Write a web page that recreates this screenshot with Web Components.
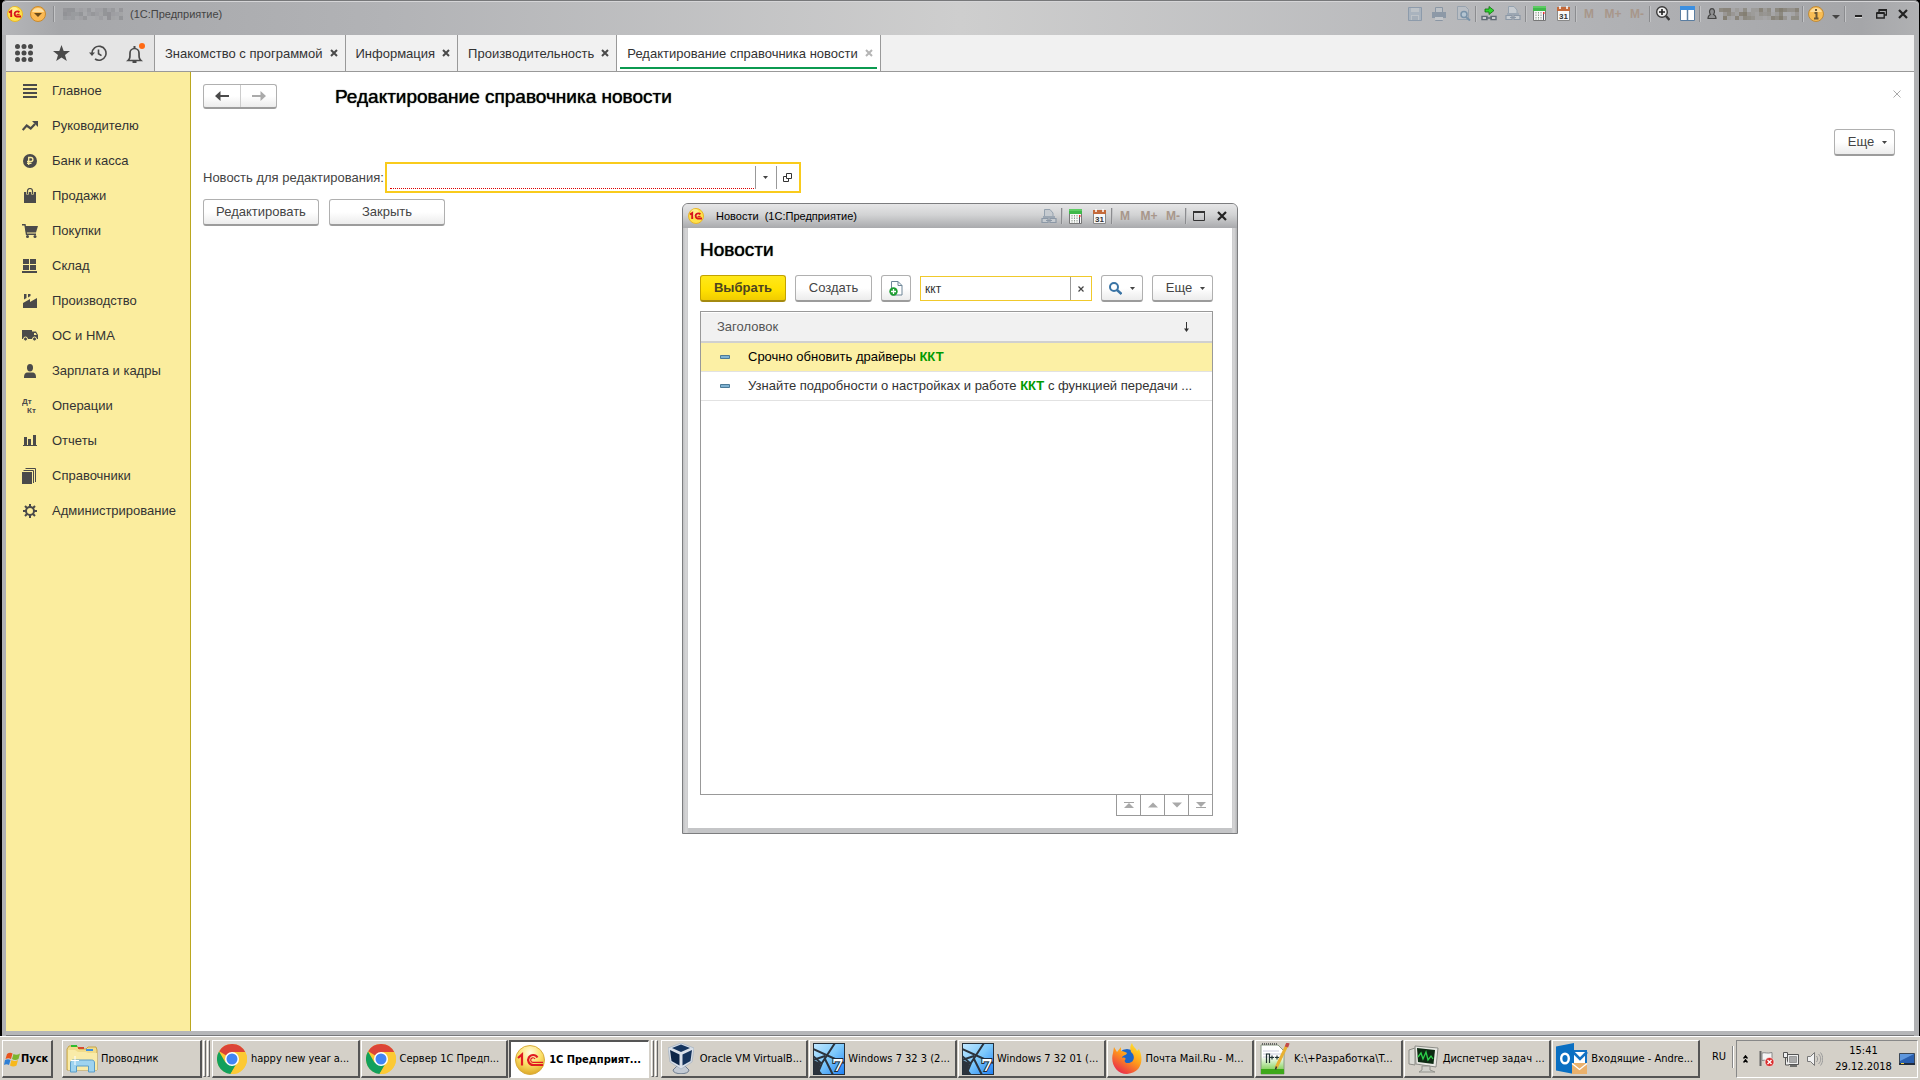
<!DOCTYPE html>
<html lang="ru">
<head>
<meta charset="utf-8">
<title>1С:Предприятие</title>
<style>
  html, body { margin: 0; height: 100%; }
  body { font: 13px/18px "Liberation Sans", Arial, sans-serif; color: #333; background: #000; overflow: hidden; }
</style>
</head>
<body>
<desktop-screen></desktop-screen>

<script>
const logo1c = `<circle cx="8" cy="8" r="7.5" fill="#ffe14a" stroke="#e8b52a"/><circle cx="7" cy="5" r="4" fill="#fff6a8" opacity=".7"/>
  <path d="M2 6.5 4.2 5v6M12.3 6.4a2.6 2.6 0 1 0-2.6 4.1H14" fill="none" stroke="#d8141c" stroke-width="1.9"/><path d="M9.6 8.4h3" stroke="#d8141c" stroke-width="1"/>`;
const chrome = `<circle cx="15" cy="15" r="15" fill="#fcc934"/><path d="M15 15 2.2 7.2A15 15 0 0 1 28.2 8H15z" fill="#dc4437"/><path d="M2 7.5A15 15 0 0 0 13.500 30L20 18.500 15 15 8.500 18.500z" fill="#12a05c"/><path d="M15 8h13.200A15 15 0 0 1 13.500 30L21 18.500z" fill="#fcc934"/><circle cx="15" cy="15" r="7" fill="#fff"/><circle cx="15" cy="15" r="5.500" fill="#4285f4"/>`;
const win7 = `<defs><linearGradient id="s" x1="0" y1="0" x2="1" y2="1"><stop offset="0" stop-color="#c4e9ff"/><stop offset=".5" stop-color="#7cc8fb"/><stop offset="1" stop-color="#1a7cf4"/></linearGradient></defs>
  <rect width="32" height="32" rx="1" fill="url(#s)"/><path d="M0 19 10 32H0z" fill="#2c333c"/><path d="M22 0 9 20 4 32H0V17l12-4M0 6l31 14M12 16l8 16M9 21 0 13" fill="none" stroke="#2c333c" stroke-width="2"/><path d="M0 17l8 3-4 12H0z" fill="#2c333c"/><rect x=".5" y=".5" width="31" height="31" fill="none" stroke="#26303a"/>
  <text x="19" y="28" font-family="DejaVu Serif" font-weight="bold" font-size="17" fill="#fff" stroke="#1d2b3c" stroke-width="2" paint-order="stroke">7</text>`;
/* name: [width, height, drawing]; the drawing's units are pixels */
const ICONS = {
  logo: [16, 16, logo1c],
  menuball: [16, 16, `<circle cx="8" cy="8" r="7.500" fill="#fbb953" stroke="#c98a2d"/><path d="M2 6a6.500 6.500 0 0 1 12 0" fill="#ffdf9e"/><path d="M4 7h8l-4 4z" fill="#6b4b1a"/>`],
  grid: [18, 18, [2.5, 9, 15.5].map(y => [2.5, 9, 15.5].map(x => `<circle cx="${x}" cy="${y}" r="2.500" fill="#4a4a4a"/>`).join('')).join('')],
  star: [17, 16, `<path d="M8.500 0l2.200 5.900 6.300.2-5 3.900 1.800 6-5.300-3.500L3.200 16 5 10 0 6.100l6.300-.2z" fill="#4a4a4a"/>`],
  history: [18, 17, `<path d="M3 9.500V8.300A7 7 0 1 1 6 14" fill="none" stroke="#4a4a4a" stroke-width="1.600"/><path d="M0 7.500h6L3 11z" fill="#4a4a4a"/><path d="M9.500 4.500v4.200l3 2" fill="none" stroke="#4a4a4a" stroke-width="1.600"/>`],
  bell: [20, 21, `<path d="M3 17.500c2-2 2-3 2-7.500a4.500 4.500 0 0 1 9 0c0 4.500 0 5.500 2 7.500z" fill="none" stroke="#4a4a4a" stroke-width="1.700"/><path d="M8.500 3h2v3h-2zM7.500 18h4v2h-4z" fill="#4a4a4a"/><circle cx="17" cy="3" r="3" fill="#ff6a13"/>`],
  x: [8, 8, `<path d="M1 1l6 6M7 1 1 7" stroke="currentColor" stroke-width="2"/>`],
  xthin: [8, 8, `<path d="M.5.5l7 7M7.500.5l-7 7" stroke="currentColor"/>`],
  xclear: [6, 6, `<path d="M.5.5l5 5M5.500.5l-5 5" stroke="currentColor" stroke-width="1.200"/>`],
  xbig: [10, 10, `<path d="M1 1l8 8M9 1 1 9" stroke="#222" stroke-width="2.200"/>`],
  lines: [14, 14, `<path d="M0 1h14M0 5h14M0 9h14M0 13h14" stroke="#4a4a4a" stroke-width="2"/>`],
  trend: [16, 10, `<path d="M.7 9l4-4.500 4 3L13 3" fill="none" stroke="#4a4a4a" stroke-width="2.200"/><path d="M10 0h6v6z" fill="#4a4a4a"/>`],
  ruble: [14, 14, `<circle cx="7" cy="7" r="7" fill="#4a4a4a"/><path d="M5.700 11V3.500h2.200a2 2 0 0 1 0 4H4M4 9.300h4.500" fill="none" stroke="#fbed9e" stroke-width="1.300"/>`],
  bag: [12, 15, `<path d="M0 4h12v11H0z" fill="#4a4a4a"/><path d="M3.500 6.500V3a2.500 2.500 0 0 1 5 0v3.500" fill="none" stroke="#fbed9e" stroke-width="2.600"/><path d="M3.500 6V3a2.500 2.500 0 0 1 5 0v3" fill="none" stroke="#4a4a4a" stroke-width="1.200"/>`],
  cart: [16, 14, `<path d="M0 .7h3l1.500 9.600H14" fill="none" stroke="#4a4a4a" stroke-width="1.400"/><path d="M3 2h13l-2 6.500H4z" fill="#4a4a4a"/><circle cx="5.500" cy="12.500" r="1.500" fill="#4a4a4a"/><circle cx="13" cy="12.500" r="1.500" fill="#4a4a4a"/>`],
  store: [15, 14, `<path d="M1 0h6v5H1zM8 0h6v5H8zM1 6h6v5H1zM8 6h6v5H8zM0 12h15v2H0z" fill="#4a4a4a"/>`],
  factory: [14, 14, `<path d="M0 14V9l7-4v3l7-4v10z" fill="#4a4a4a"/><path d="M1 0h2.500v4L1 5.500zM5 0h2.500v2L5 3.500z" fill="#4a4a4a"/>`],
  truck: [16, 11, `<path d="M0 0h10v9H0z" fill="#4a4a4a"/><path d="M10 1.500h4L16 5v4h-6z" fill="#4a4a4a"/><path d="M12 3h1.700l1 2H12z" fill="#fbed9e"/><circle cx="3.500" cy="9" r="2" fill="#4a4a4a" stroke="#fbed9e"/><circle cx="12.500" cy="9" r="2" fill="#4a4a4a" stroke="#fbed9e"/>`],
  person: [12, 14, `<ellipse cx="6" cy="3.700" rx="3" ry="3.700" fill="#4a4a4a"/><path d="M0 14c0-4 1-5.500 4-5.500h4c3 0 4 1.500 4 5.500z" fill="#4a4a4a"/>`],
  dtkt: [15, 16, `<g font-family="Liberation Sans" font-weight="bold" font-size="8" fill="#4a4a4a"><text x="0" y="6">Дт</text><text x="5" y="15">Кт</text></g>`],
  bars: [14, 11, `<path d="M1 2h3v8H1zM5 4h3v6H5zM10 0h3v10h-3zM0 10h14v1H0z" fill="#4a4a4a"/>`],
  books: [15, 16, `<path d="M0 4h10v12H0z" fill="#4a4a4a"/><path d="M1.500 2.500h10V15M3.500.5h10V14" fill="none" stroke="#4a4a4a"/>`],
  gear: [14, 14, `<circle cx="7" cy="7" r="4" fill="none" stroke="#4a4a4a" stroke-width="2"/><path d="M7 0v3M7 11v3M0 7h3M11 7h3M2 2l2 2M10 10l2 2M12 2l-2 2M4 10l-2 2" stroke="#4a4a4a" stroke-width="2"/>`],
  left: [14, 10, `<path d="M0 5l5.500-5v4H14v2H5.500v4z" fill="#4a4a4a"/>`],
  right: [14, 10, `<path d="M14 5 8.500 0v4H0v2h8.500v4z" fill="#aaa"/>`],
  caret: [5, 3, `<path d="M0 0h5L2.500 3z" fill="#444"/>`],
  open: [9, 9, `<path d="M3.500.5h5v5h-5zM3 3.500H.5v5h5V6" fill="none" stroke="#333"/>`],
  save: [14, 14, `<path d="M.5.5h13v13H.5z" fill="#a9b3be" stroke="#8d9bab"/><path d="M3 1h8v4H3zM3 8h8v5H3z" fill="#bdc2c7"/><path d="M4 10h6M4 12h6" stroke="#8d9bab"/>`],
  print: [14, 14, `<path d="M3.500 5V.5h7V5M3.500 9.500h7v4h-7z" fill="#bcc1c6" stroke="#8a96a4"/><path d="M0 5h14v6H0z" fill="#8d99a7"/><path d="M3 10h8v3H3z" fill="#c3c6ca"/>`],
  preview: [15, 15, `<path d="M1.500.5h8l3 3v10h-11z" fill="#b9bec4" stroke="#97a2ae"/><circle cx="8" cy="8.500" r="3" fill="#b5c5d2" stroke="#7992a8" stroke-width="1.500"/><path d="M10 11l4 3.500" stroke="#7992a8" stroke-width="2"/>`],
  link: [16, 15, `<path d="M1 13.500v-3h5v3zM10 13.500v-3h5v3zM5 12h6" fill="#eee" stroke="#5f6a75" stroke-width="1.400"/><path d="M4 6h4v2.500l5-4-5-4V3H4z" fill="#2fd42f" stroke="#107010" stroke-width=".8"/>`],
  printlink: [16, 15, `<path d="M3.500 7V.5H9L12 4v3" fill="#c6cbd0" stroke="#95a2af"/><path d="M1 9.500h6v4H1zM9 9.500h6v4H9zM5 11.500h6" fill="#c6cbd0" stroke="#8c98a6" stroke-width="1.200"/><path d="M2 7h12v2H2z" fill="#9ca7b3"/>`],
  calc: [13, 15, `<path d="M.5.5h12v14H.5z" fill="#f7f7f7" stroke="#777"/><path d="M0 0h13v5H0z" fill="#3fb84a"/><path d="M0 1h13" stroke="#7fe07f"/><path d="M3 6v8M5.500 6v8M8 6v8" stroke="#8c9a8c" stroke-dasharray="1.500 1"/><path d="M10.500 8v6" stroke="#556"/><path d="M10 6h1.500v2H10z" fill="#e33"/>`],
  cal: [13, 15, `<path d="M.5 1.500h12v13H.5z" fill="#f8f8f8" stroke="#888"/><path d="M0 1h13v4H0z" fill="#c46a3a"/><path d="M3 0v3M10 0v3" stroke="#fff" stroke-width="1.500"/><text x="2" y="12.500" font-family="Liberation Sans" font-size="8" fill="#333">31</text>`],
  zoom: [14, 15, `<circle cx="6" cy="6" r="5.300" fill="#eee" stroke="#3a3a3a" stroke-width="1.400"/><path d="M3 6h6M6 3v6" stroke="#222" stroke-width="1.600"/><path d="M10 10l3.500 4" stroke="#3a3a3a" stroke-width="2.500"/>`],
  panes: [15, 15, `<path d="M.5.5h14v14H.5z" fill="#fff" stroke="#5a7da0"/><path d="M0 0h15v4H0z" fill="#3c8fe0"/><path d="M7.500 4v11" stroke="#5a7da0" stroke-width="1.500"/>`],
  user: [10, 11, `<path d="M1 10.500c0-2.500 1-3.500 2.500-4C1.800 4 2.500.7 5 .7S8.200 4 6.500 6.500c1.500.5 2.500 1.500 2.500 4z" fill="#8e8f91" stroke="#444" stroke-width="1.200"/>`],
  info: [16, 16, `<circle cx="8" cy="8" r="7.500" fill="#f9be55" stroke="#bd8a3c"/><path d="M2 6a6.500 6.500 0 0 1 12 0" fill="#ffdc96"/><path d="M8 3v2M6.500 7H8.500v5M6 12.500h4.500" stroke="#6a5838" stroke-width="2" fill="none"/>`],
  drop: [8, 4, `<path d="M0 0h8L4 4z" fill="#444"/>`],
  min: [7, 3, `<path d="M0 0h7v2H0z" fill="#222"/><path d="M0 2h7v1H0z" fill="#ddd"/>`],
  restore: [11, 10, `<path d="M3 3V1h7.500v5H8M.7 4h7.500v5H.7z" fill="none" stroke="#222" stroke-width="1.400"/><path d="M3 1h8M1 4h7" stroke="#222" stroke-width="2"/>`],
  max: [12, 10, `<path d="M.5 1h11v8.500H.5z" fill="none" stroke="#333"/><path d="M0 1h12" stroke="#333" stroke-width="2"/>`],
  addpage: [14, 15, `<path d="M2.500.5H9l4 4v9.500H2.500z" fill="#fff" stroke="#6e8698"/><path d="M9 .5v4h4" fill="none" stroke="#6e8698"/><circle cx="4.500" cy="10.500" r="4.200" fill="#1f9e33"/><path d="M2 10.500h5M4.500 8v5" stroke="#fff" stroke-width="1.300"/>`],
  search: [13, 13, `<circle cx="5" cy="5" r="4" fill="none" stroke="#3a74a5" stroke-width="2"/><path d="M8 8l4.500 4" stroke="#3a74a5" stroke-width="2.400"/>`],
  sort: [5, 10, `<path d="M2.500 0v9" stroke="#333"/><path d="M0 6.500h5L2.500 10z" fill="#333"/>`],
  dash: [10, 4, `<path d="M.5.5h9v3h-9z" fill="#7fb2d2" stroke="#4c7a98"/>`],
  first: [10, 6, `<path d="M0 .5h10" stroke="#a3a3a3"/><path d="M0 6h10L5 1z" fill="#a9a9a9"/>`],
  up: [10, 6, `<path d="M0 5.500h10L5 .5z" fill="#a9a9a9"/>`],
  down: [10, 6, `<path d="M0 .5h10L5 5.500z" fill="#a9a9a9"/>`],
  last: [10, 6, `<path d="M0 5.500h10" stroke="#a3a3a3"/><path d="M0 0h10L5 5z" fill="#a9a9a9"/>`],
  start: [17, 16, `<path d="M3 3c2-1.500 4-1.500 5.500-.5L7 8C5.500 7 3.500 7 1.500 8z" fill="#e8541e"/><path d="M9.500 3c2 1 4 1 6.500-.5L14.500 8c-2 1.200-4.500 1.200-6.500 0z" fill="#7cb52c"/><path d="M1 9c2-1 4-1 5.500 0L5 14c-1.500-1-3.500-1-5 0z" fill="#2f7fd4"/><path d="M7.500 9c2 1.200 4.500 1.200 6.500 0l-1.500 5.500c-2 1.200-4.500 1.200-6.500 0z" fill="#f7b81c"/>`],
  explorer: [32, 30, `<path d="M1 5l2-3h8l2 3h7l2-2h8l1 3v20H1z" fill="#f1dc8a" stroke="#c6a548"/><path d="M5 1h6v2H5z" fill="#2ebc2e"/><path d="M12 3h6v2h-6z" fill="#d8492e"/><path d="M20 5h7v2h-7z" fill="#3d8fe0"/><path d="M2 6h7l3 2h8l2 1h9v17H2z" fill="#f9eba8"/><path d="M4.500 28V19c0-2 1-3 3-3h18c2 0 3 1 3 3v9h-6v-6h-12v6z" fill="#9ed3ef" stroke="#5a9cc6"/><path d="M9 12v9M5 16.500h8" stroke="#fff"/>`],
  chrome: [30, 30, chrome],
  bigLogo: [30, 30, `<defs><radialGradient id="g" cx=".5" cy=".25" r=".8"><stop offset="0" stop-color="#fffbe0"/><stop offset=".5" stop-color="#fbe069"/><stop offset="1" stop-color="#dba11c"/></radialGradient></defs><circle cx="15" cy="15" r="14.500" fill="url(#g)" stroke="#d8ac3e"/><path d="M3 13l4-3.500v11M22.500 12.500a5 5 0 1 0-4.500 7.500h10" fill="none" stroke="#e01b22" stroke-width="2.200"/><path d="M20 14a2.300 2.300 0 1 0-2 3.400h10" fill="none" stroke="#e01b22" stroke-width="1.200"/>`],
  vbox: [26, 31, `<path d="M9 23l-4 4c0 5 16 5 16 0l-4-4z" fill="#c3cad4" stroke="#6f7c8e"/><path d="M13 0l13 5-2 14-11 7L2 19 0 5z" fill="#d8dfe8" stroke="#9aa9bb" stroke-width=".6"/><path d="M13 1.500l9 3.500-9 4-9-4z" fill="#15355f"/><path d="M2 7l9.500 4.500v11L3.500 18z" fill="#0c2547"/><path d="M24 7l-9.500 4.500v11l8-4.500z" fill="#14335c"/>`],
  win7: [32, 32, win7],
  firefox: [30, 31, `<defs><linearGradient id="f" x1=".8" y1="0" x2=".2" y2="1"><stop offset="0" stop-color="#ffe52e"/><stop offset=".45" stop-color="#ff9c1b"/><stop offset="1" stop-color="#e8204f"/></linearGradient></defs><circle cx="15" cy="16" r="10" fill="#1b66c9"/><path d="M20 0c1 4 4 5 5 8l2-2c5 10 3 24-12 25C4 31-2 20 1 10l1-6 3 5 4-5v4c3 0 4 1 6 2-1 3-5 2-5 5 2-1 3 0 4 1-2 1-2 4 2 4 6 0 8-7 3-11-1-4-1-6 1-9z" fill="url(#f)"/>`],
  npp: [30, 32, `<defs><linearGradient id="n" x1="0" y1="0" x2="0" y2="1"><stop offset=".4" stop-color="#fff"/><stop offset="1" stop-color="#5fc42a"/></linearGradient></defs><path d="M1 2h17l6 6v23H1z" fill="url(#n)" stroke="#8a9a82"/><path d="M2 1h16" stroke="#666" stroke-width="2" stroke-dasharray="1 1"/><path d="M3 8h16M3 11h20M3 14h20" stroke="#ccd"/><path d="M1 26h23v5H1z" fill="#3da81a"/><path d="M6.500 20V11h3v9M10 14.500h4M12 12.500v4M15 14.500h4M17 12.500v4" fill="none" stroke="#233" stroke-width="1.200"/><path d="M27 2 16 25" stroke="#e8b132" stroke-width="3"/><path d="M28 0l-1.500 4" stroke="#c34a4a" stroke-width="3.500"/><path d="M16.500 23.500l-1 3" stroke="#333" stroke-width="1.500"/>`],
  taskmgr: [31, 28, `<path d="M1 5l6-2v17l-6-1z" fill="#dcdcd6" stroke="#8b8b85"/><path d="M7 1l23 2-2 19-20-3z" fill="#e9e9e4" stroke="#8d8d88"/><path d="M9 3l18 2-1.500 14L10 17z" fill="#0c2a12"/><path d="M10 12l3-4 2 6 3-7 2 8 3-4 2 3" fill="none" stroke="#2cd14a" stroke-width="1.300"/><path d="M14 21h8v4l5 2H11l3-2z" fill="#d0d0ca" stroke="#92928c"/>`],
  outlook: [32, 32, `<path d="M17 8h13v14H17z" fill="#fff" stroke="#1272c4" stroke-width="2"/><path d="M17 9l7 7 7-7" fill="none" stroke="#1272c4" stroke-width="2.500"/><path d="M0 3.500 18 0v31L0 27.500z" fill="#0a6fc2"/><ellipse cx="9" cy="15.500" rx="3.800" ry="4.800" fill="none" stroke="#fff" stroke-width="2.400"/><path d="M16 20h15v11H16z" fill="#eab16c"/><path d="M16 20.500l7.500 6 7.500-6" fill="none" stroke="#fff" stroke-width="1.300"/>`],
  chevrons: [5, 9, `<path d="M.5 3.500l2-2.500 2 2.500M.5 7.500l2-2.500 2 2.500" fill="none" stroke="#000" stroke-width="1.500"/>`],
  flag: [16, 16, `<path d="M1.500 0v15" stroke="#666" stroke-width="2"/><path d="M3 2c3-1 5 1 10-.5V9c-5 1.500-7-.5-10 .5z" fill="#f4f4f4" stroke="#888"/><circle cx="10.500" cy="11" r="4.500" fill="#d82c2c" stroke="#fff" stroke-width=".6"/><path d="M8.500 9l4 4M12.500 9l-4 4" stroke="#fff" stroke-width="1.400"/>`],
  network: [16, 15, `<path d="M4.500 2.500h11v10h-11z" fill="#f0f0f0" stroke="#555"/><path d="M6.500 4.500h7v6h-7z" fill="#aaa" stroke="#999"/><path d="M7 14h7" stroke="#555" stroke-width="1.600"/><path d="M.5.5h4v5h-4zM2.500 6v7H6" fill="#eee" stroke="#555"/>`],
  volume: [16, 14, `<path d="M.5 4.500h3l4-4v13l-4-4h-3z" fill="#f1f1f1" stroke="#777"/><path d="M9.500 4c1.500 2 1.500 4 0 6M11.500 2c3 3 3 7 0 10M13.500.5c3 4 3 9 0 13" fill="none" stroke="#999"/>`],
  screen: [16, 13, `<path d="M.5.5h15v10H.5z" fill="#2a5fae" stroke="#3b4756"/><path d="M1 1h14L1 8z" fill="#5f97dd"/><path d="M0 10h16v2H0z" fill="#222d3d"/><path d="M2 10.500h3" stroke="#f5d23c"/>`]
};

class UiIcon extends HTMLElement {
  connectedCallback() {
    const [w, h, body] = ICONS[this.getAttribute('name')];
    this.attachShadow({ mode: 'open' }).innerHTML =
      `<style>:host{display:inline-flex;flex:none}svg{display:block}</style><svg width="${w}" height="${h}" viewBox="0 0 ${w} ${h}" aria-hidden="true">${body}</svg>`;
  }
}

/* Row of coarse blocks that hides a private name */
class MosaicName extends HTMLElement {
  connectedCallback() {
    const cols = +this.getAttribute('cols'), size = +this.getAttribute('size'), dark = this.getAttribute('tone');
    let s = '', seed = 7;
    for (let y = 0; y < 3; y++) for (let x = 0; x < cols; x++) {
      seed = (seed * 73 + 41) % 101;
      s += `<rect x="${x * size}" y="${y * size}" width="${size}" height="${size}" fill="${dark}" opacity="${(seed % 10) / 14}"/>`;
    }
    this.attachShadow({ mode: 'open' }).innerHTML = `<style>:host{display:inline-flex;flex:none}</style><svg width="${cols * size}" height="${3 * size}" aria-hidden="true">${s}</svg>`;
  }
}

const define = (name, html, setup) => {
  const tpl = document.createElement('template');
  tpl.innerHTML = html;
  customElements.define(name, class extends HTMLElement {
    constructor() { super(); this.attachShadow({ mode: 'open' }).append(tpl.content.cloneNode(true)); }
    connectedCallback() { if (setup) setup(this, this.shadowRoot); }
  });
};
const labelButton = (el, r) => { if (el.hasAttribute('label')) r.querySelector('button').setAttribute('aria-label', el.getAttribute('label')); };

customElements.define('ui-icon', UiIcon);
customElements.define('mosaic-name', MosaicName);

define('tool-sep', `<style>:host{display:block;flex:none;width:1px;height:16px;background:#8b8c8f;border-right:1px solid #c3c4c6}</style>`);

define('tool-button', `
<style>
  :host { display: flex; flex: none; width: 24px; }
  button { all: unset; box-sizing: border-box; width: 100%; height: 20px; display: flex; align-items: center; justify-content: center; font: bold 12px/16px "Liberation Sans", sans-serif; color: #a8978b; }
</style>
<button><slot></slot></button>`, labelButton);

define('push-button', `
<style>
  :host { display: flex; flex: none; }
  button { width: 100%; height: 27px; padding: 0 8px; display: flex; align-items: center; justify-content: center; gap: 8px;
    font: 13px/18px "Liberation Sans", Arial, sans-serif; color: #444; background: linear-gradient(#fff 50%, #ececec);
    border: 1px solid #b0b0b0; border-bottom: 2px solid #9c9c9c; border-radius: 3px; white-space: nowrap; }
  :host([menu]) button { padding: 0 6px 0 12px; }
  :host([primary]) button { font-weight: bold; color: #4c4420; background: linear-gradient(#ffe81a, #ffe000 60%, #f0cc00); border-color: #c2a200; border-bottom-color: #a48a10; }
</style>
<button><slot></slot></button>`, labelButton);

define('title-bar', `
<style>
  :host { display: flex; align-items: center; height: 25px; padding: 0 5px 9px; border-top: 1px solid #77787a; border-radius: 5px 5px 0 0;
    background: linear-gradient(90deg, #b5b6b9, #a6a7aa 3%, #b2b3b6 20%, #cecece 50%, #b4b5b8 80%, #a5a6a9 97%, #b0b1b3); color: #444; font-size: 11px; box-shadow: inset 0 1px #d5d5d7; }
  .name { display: flex; align-items: center; gap: 7px; flex: 1; }
  .name mosaic-name { margin-left: 1px; }
  .tools { display: flex; align-items: center; }
  .tools mosaic-name { margin: 0 3px 0 2px; }
  .s { width: 22px; }
</style>
<div class="name"><ui-icon name="logo"></ui-icon><ui-icon name="menuball"></ui-icon><tool-sep></tool-sep><mosaic-name cols="15" size="4" tone="#85868a"></mosaic-name><span>(1С:Предприятие)</span></div>
<div class="tools">
  <tool-button label="Сохранить"><ui-icon name="save"></ui-icon></tool-button>
  <tool-button label="Печать"><ui-icon name="print"></ui-icon></tool-button>
  <tool-button label="Просмотр"><ui-icon name="preview"></ui-icon></tool-button>
  <tool-sep></tool-sep>
  <tool-button label="Получить ссылку"><ui-icon name="link"></ui-icon></tool-button>
  <tool-button label="Перейти по ссылке"><ui-icon name="printlink"></ui-icon></tool-button>
  <tool-sep></tool-sep>
  <tool-button label="Калькулятор"><ui-icon name="calc"></ui-icon></tool-button>
  <tool-button label="Календарь"><ui-icon name="cal"></ui-icon></tool-button>
  <tool-sep></tool-sep>
  <tool-button>M</tool-button><tool-button>M+</tool-button><tool-button>M-</tool-button>
  <tool-sep></tool-sep>
  <tool-button label="Масштаб"><ui-icon name="zoom"></ui-icon></tool-button>
  <tool-button label="Панели"><ui-icon name="panes"></ui-icon></tool-button>
  <tool-sep></tool-sep>
  <ui-icon name="user" style="margin-left:6px"></ui-icon><mosaic-name cols="20" size="4" tone="#6f6753"></mosaic-name>
  <tool-sep></tool-sep>
  <tool-button label="Сведения"><ui-icon name="info"></ui-icon></tool-button>
  <tool-button style="width:16px;padding-top:6px" label="Ещё"><ui-icon name="drop"></ui-icon></tool-button>
  <tool-sep></tool-sep>
  <tool-button style="padding-top:6px" label="Свернуть"><ui-icon name="min"></ui-icon></tool-button>
  <tool-button class="s" label="Восстановить"><ui-icon name="restore"></ui-icon></tool-button>
  <tool-button class="s" label="Закрыть"><ui-icon name="xbig"></ui-icon></tool-button>
</div>`);

define('app-tab', `
<style>
  :host { display: flex; border-right: 1px solid #999; padding: 0 3px; background: #f1f1f1; }
  div { display: flex; align-items: center; gap: 7px; padding: 0 4px 0 7px; margin-bottom: 2px; }
  button { all: unset; color: #4a4a4a; display: flex; padding-top: 1px; }
  a { color: #333; text-decoration: none; white-space: nowrap; padding-top: 3px; }
  :host([active]) { background: #fff; }
  :host([active]) div { box-shadow: inset 0 -2px #0b9a50; }
  :host([active]) button { color: #b5b5b5; }
</style>
<div><a href="#"><slot></slot></a><button aria-label="Закрыть вкладку"><ui-icon name="x"></ui-icon></button></div>`);

define('tab-bar', `
<style>
  :host { display: flex; height: 36px; background: #f1f1f1; border-bottom: 1px solid #999; }
  .quick { display: flex; align-items: center; box-sizing: border-box; padding-right: 1px; width: 149px; background: #e5e5e5; border-right: 1px solid #999; }
  .quick button { all: unset; flex: 1; display: flex; justify-content: center; align-items: center; height: 36px; }
</style>
<div class="quick"><button aria-label="Меню"><ui-icon name="grid"></ui-icon></button><button aria-label="Избранное"><ui-icon name="star"></ui-icon></button><button aria-label="История"><ui-icon name="history"></ui-icon></button><button aria-label="Оповещения"><ui-icon name="bell"></ui-icon></button></div>
<app-tab>Знакомство с программой</app-tab><app-tab>Информация</app-tab><app-tab>Производительность</app-tab><app-tab active>Редактирование справочника новости</app-tab>`);

define('nav-item', `
<style>
  :host { display: block; }
  a { display: flex; align-items: center; height: 35px; color: #333; text-decoration: none; }
  span { width: 46px; padding-left: 1px; box-sizing: border-box; display: flex; justify-content: center; }
</style>
<a href="#"><span><ui-icon></ui-icon></span><slot></slot></a>`);
define('side-nav', `
<style>:host { display: block; flex: none; width: 184px; padding-top: 1px; background: #fbed9e; border-right: 1px solid #bba71f; }</style>
<nav></nav>`, (el, r) => {
  const items = [['lines', 'Главное'], ['trend', 'Руководителю'], ['ruble', 'Банк и касса'], ['bag', 'Продажи'], ['cart', 'Покупки'], ['store', 'Склад'], ['factory', 'Производство'], ['truck', 'ОС и НМА'], ['person', 'Зарплата и кадры'], ['dtkt', 'Операции'], ['bars', 'Отчеты'], ['books', 'Справочники'], ['gear', 'Администрирование']];
  for (const [icon, text] of items) {
    const item = document.createElement('nav-item');
    item.shadowRoot.querySelector('ui-icon').setAttribute('name', icon);
    item.textContent = text;
    r.querySelector('nav').append(item);
  }
});

define('edit-form', `
<style>
  :host { display: block; flex: 1; background: #fff; padding: 12px 19px 0 12px; }
  header { display: flex; align-items: center; }
  .hist { display: flex; margin-right: 58px; border: 1px solid #b0b0b0; border-bottom: 2px solid #9c9c9c; border-radius: 3px; background: linear-gradient(#fff 50%, #ececec); }
  .hist button { all: unset; width: 36px; height: 22px; display: flex; align-items: center; justify-content: center; }
  .hist button + button { border-left: 1px solid #ccc; width: 35px; }
  h1 { flex: 1; margin: 0; font: 19px/24px "Liberation Sans", Arial, sans-serif; color: #000; text-shadow: 0 0 1px #000; }
  .close { all: unset; color: #aaa; padding: 0 0 5px; margin-right: -6px; }
  .more { display: flex; justify-content: flex-end; margin: 20px 0 6px; }
  .more push-button { width: 61px; }
  .row { display: flex; align-items: center; gap: 1px; color: #444; }
  .field { display: flex; align-items: center; width: 412px; height: 27px; border: 2px solid #f9cb1c; }
  input { flex: 1; min-width: 0; height: 22px; box-sizing: border-box; margin: 0 1px 0 3px; padding: 0; border: 0; border-bottom: 1px dotted #d00; outline: 0; font: inherit; }
  .field button { all: unset; width: 20px; height: 23px; border-left: 1px solid #999; display: flex; align-items: center; justify-content: center; }
  .field button:last-child { width: 22px; }
  .acts { display: flex; gap: 10px; margin-top: 6px; }
  .acts push-button { width: 116px; }
</style>
<header>
  <div class="hist"><button aria-label="Назад"><ui-icon name="left"></ui-icon></button><button aria-label="Вперед"><ui-icon name="right"></ui-icon></button></div>
  <h1>Редактирование справочника новости</h1>
  <button class="close" aria-label="Закрыть"><ui-icon name="xthin"></ui-icon></button>
</header>
<div class="more"><push-button menu><span>Еще</span><ui-icon name="caret"></ui-icon></push-button></div>
<div class="row"><label for="news">Новость для редактирования:</label>
  <div class="field"><input id="news" type="text"><button aria-label="Список"><ui-icon name="caret"></ui-icon></button><button aria-label="Открыть"><ui-icon name="open"></ui-icon></button></div></div>
<div class="acts"><push-button>Редактировать</push-button><push-button>Закрыть</push-button></div>`);

define('news-dialog', `
<style>
  :host { display: flex; flex-direction: column; box-sizing: border-box; border: 1px solid #7c7d7f; border-radius: 6px 6px 0 0; padding: 0 5px 5px; background: linear-gradient(90deg, #c0c1c3, #d6d6d7 3px, #c4c5c7 6px, #c4c5c7 calc(100% - 6px), #d6d6d7 calc(100% - 3px), #b4b5b7); }
  .bar { display: flex; align-items: center; height: 24px; margin: 0 -5px; padding: 0 4px 0 5px; border-radius: 5px 5px 0 0; font-size: 11px; color: #000; background: linear-gradient(#e6e6e7, #d2d3d4 45%, #a9aaad); }
  .bar b { font-weight: normal; flex: 1; margin-left: 12px; white-space: pre; }
  .s { width: 22px; }
  .body { flex: 1; display: flex; flex-direction: column; background: #fff; padding: 9px 19px 12px 12px; }
  h2 { margin: 0 0 12px; font: 19px/26px "Liberation Sans", Arial, sans-serif; color: #000; text-shadow: 0 0 1px #000; }
  .tools { display: flex; align-items: center; gap: 9px; margin-bottom: 9px; }
  .find { flex: 1 1 0; min-width: 0; display: flex; height: 23px; border: 1px solid #f0c92c; }
  .find input { flex: 1 1 0; min-width: 0; border: 0; padding: 0 4px; outline: 0; font: 12px/18px "Liberation Sans", Arial, sans-serif; color: #333; }
  .find button { all: unset; flex: none; width: 20px; border-left: 1px solid #999; display: flex; align-items: center; justify-content: center; color: #444; }
  .list { flex: 1; border: 1px solid #999; padding: 1px 0 0; }
  table { width: 100%; border-collapse: collapse; table-layout: fixed; }
  th { height: 28px; padding: 0 16px; text-align: left; font-weight: normal; color: #555; background: #f1f1f1; border-bottom: 2px solid #d0d0d0; }
  th span { display: flex; justify-content: space-between; align-items: center; padding-right: 7px; }
  td { height: 28px; padding: 0; border-bottom: 1px solid #e2e2e2; white-space: nowrap; }
  td span { display: flex; align-items: center; gap: 18px; padding-left: 19px; }
  td em { font-style: normal; }
  td strong { color: #009a00; }
  .sel td { background: #fcf0a5; color: #000; }
  .pager { display: flex; align-self: flex-end; border: 1px solid #999; border-top: 0; }
  .pager button { all: unset; width: 23px; height: 20px; display: flex; align-items: center; justify-content: center; }
  .pager button + button { border-left: 1px solid #999; }
</style>
<div class="bar"><ui-icon name="logo"></ui-icon><b>Новости  (1С:Предприятие)</b>
  <tool-button label="Ссылка"><ui-icon name="printlink"></ui-icon></tool-button><tool-sep></tool-sep>
  <tool-button label="Калькулятор"><ui-icon name="calc"></ui-icon></tool-button><tool-button label="Календарь"><ui-icon name="cal"></ui-icon></tool-button><tool-sep></tool-sep>
  <tool-button>M</tool-button><tool-button>M+</tool-button><tool-button>M-</tool-button><tool-sep></tool-sep>
  <tool-button label="Развернуть"><ui-icon name="max"></ui-icon></tool-button><tool-button class="s" label="Закрыть"><ui-icon name="xbig"></ui-icon></tool-button></div>
<div class="body">
  <h2>Новости</h2>
  <div class="tools">
    <push-button primary style="width:86px">Выбрать</push-button><push-button style="width:77px">Создать</push-button>
    <push-button style="width:30px" label="Создать копированием"><ui-icon name="addpage"></ui-icon></push-button>
    <div class="find"><input type="text" aria-label="Поиск" value="ккт"><button aria-label="Очистить"><ui-icon name="xclear"></ui-icon></button></div>
    <push-button style="width:42px" label="Найти"><ui-icon name="search"></ui-icon><ui-icon name="caret"></ui-icon></push-button>
    <push-button menu style="width:61px"><span>Еще</span><ui-icon name="caret"></ui-icon></push-button>
  </div>
  <div class="list"><table>
    <thead><tr><th><span>Заголовок<ui-icon name="sort"></ui-icon></span></th></tr></thead>
    <tbody><tr class="sel"><td><span><ui-icon name="dash"></ui-icon><em>Срочно обновить драйверы <strong>ККТ</strong></em></span></td></tr>
    <tr><td><span><ui-icon name="dash"></ui-icon><em>Узнайте подробности о настройках и работе <strong>ККТ</strong> с функцией передачи ...</em></span></td></tr></tbody>
  </table></div>
  <div class="pager"><button aria-label="В начало"><ui-icon name="first"></ui-icon></button><button aria-label="Вверх"><ui-icon name="up"></ui-icon></button><button aria-label="Вниз"><ui-icon name="down"></ui-icon></button><button aria-label="В конец"><ui-icon name="last"></ui-icon></button></div>
</div>`);

define('task-button', `
<style>
  :host { display: block; flex: 0 1 148px; min-width: 0; }
  button { width: 100%; height: 38px; box-sizing: border-box; display: flex; align-items: center; gap: 3px; padding: 0 3px; text-align: left; white-space: nowrap; overflow: hidden;
    background: #d4d0c8; color: #000; border: 1px solid; border-width: 1px 2px 2px 1px; border-color: #fff #555 #555 #fff; font: 11px/16px "DejaVu Sans Condensed", "DejaVu Sans", sans-serif; }
  span { flex: none; width: 32px; display: flex; justify-content: center; }
  :host([active]) button { background: #fff; font-weight: bold; border-width: 2px 1px 1px 2px; border-color: #555 #fff #fff #555; }
  :host([start]) { flex: none; width: 51px; }
  :host([start]) span { width: 17px; }
  :host([start]) button { font-weight: bold; gap: 0; padding: 0 1px; }
</style>
<button><span><slot name="icon"></slot></span><slot></slot></button>`);

define('task-bar', `
<style>
  :host { display: flex; align-items: flex-start; height: 40px; padding: 3px 2px 0; background: #d4d0c8; border-top: 1px solid #fff; color: #000; font: 11px/16px "DejaVu Sans Condensed", "DejaVu Sans", sans-serif; }
  .grip { flex: none; width: 3px; height: 37px; border: 1px solid; border-color: #fff #666 #666 #fff; box-sizing: border-box; margin-left: 1px; }
  .apps { flex: 1; display: flex; gap: 1px; min-width: 0; }
  .explorer { width: 140px; margin-left: 9px; flex: none; }
  .g { display: flex; margin-right: 2px; }
  .lang { margin: 9px 6px 0 12px; }
  .bar { width: 1px; height: 22px; margin-top: 6px; background: #888; border-right: 1px solid #fff; }
  .tray { display: flex; align-items: center; box-sizing: border-box; height: 38px; margin-left: 2px; width: 182px; border: 1px solid; border-color: #888 #fff #fff #888; padding: 0 2px 0 6px; }
  .tray ui-icon + ui-icon { margin-left: 8px; }
  .tray ui-icon:nth-child(2) { margin-left: 11px; }
  time { flex: 1; text-align: center; padding-left: 5px; }
</style>
<task-button start><ui-icon slot="icon" name="start"></ui-icon>Пуск</task-button>
<task-button class="explorer"><ui-icon slot="icon" name="explorer"></ui-icon>Проводник</task-button><div class="g"><div class="grip"></div><div class="grip"></div></div>
<div class="apps">
  <task-button><ui-icon slot="icon" name="chrome"></ui-icon>happy new year a...</task-button>
  <task-button><ui-icon slot="icon" name="chrome"></ui-icon>Сервер 1С Предп...</task-button>
  <task-button active style="flex-basis:140px"><ui-icon slot="icon" name="bigLogo"></ui-icon>1С Предприят...</task-button><div class="g"><div class="grip"></div><div class="grip"></div></div>
  <task-button><ui-icon slot="icon" name="vbox"></ui-icon>Oracle VM VirtualB...</task-button>
  <task-button><ui-icon slot="icon" name="win7"></ui-icon>Windows 7 32 3 (2...</task-button>
  <task-button><ui-icon slot="icon" name="win7"></ui-icon>Windows 7 32 01 (...</task-button>
  <task-button><ui-icon slot="icon" name="firefox"></ui-icon>Почта Mail.Ru - M...</task-button>
  <task-button><ui-icon slot="icon" name="npp"></ui-icon>K:\\+Разработка\\T...</task-button>
  <task-button><ui-icon slot="icon" name="taskmgr"></ui-icon>Диспетчер задач ...</task-button>
  <task-button><ui-icon slot="icon" name="outlook"></ui-icon>Входящие - Andre...</task-button>
</div>
<span class="lang">RU</span><div class="bar"></div>
<div class="tray"><ui-icon name="chevrons"></ui-icon><ui-icon name="flag"></ui-icon><ui-icon name="network"></ui-icon><ui-icon name="volume"></ui-icon><time>15:41<br>29.12.2018</time><ui-icon name="screen"></ui-icon></div>`);

define('desktop-screen', `
<style>
  :host { display: flex; flex-direction: column; height: 100vh; position: relative; }
  .window { flex: 1; display: flex; flex-direction: column; margin: 0 1px 0 2px; min-height: 0; background: #b0b1b3; border-radius: 5px 5px 0 0; }
  .client { flex: 1; display: flex; flex-direction: column; margin: 0 5px 1px 4px; border-bottom: 4px solid #b5b6b8; box-shadow: 0 1px #77787a; min-height: 0; }
  .main { flex: 1; display: flex; min-height: 0; }
  news-dialog { position: absolute; left: 682px; top: 203px; width: 556px; height: 631px; }
</style>
<div class="window"><title-bar></title-bar><div class="client"><tab-bar></tab-bar><div class="main"><side-nav></side-nav><edit-form></edit-form></div></div></div>
<task-bar></task-bar>
<news-dialog></news-dialog>`);
</script>
</body>
</html>
